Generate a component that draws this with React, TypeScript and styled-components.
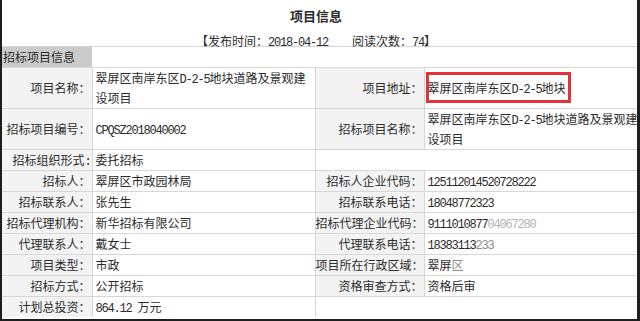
import React from 'react'
import styled, {createGlobalStyle} from 'styled-components'

const GlobalStyle = createGlobalStyle`
  html, body {
    margin: 0;
    padding: 0;
    background: #fff;
  }
  body {
    font-family: "Noto Sans CJK SC", "Noto Sans", sans-serif;
    color: #2b2b2b;
  }
`

const Frame = styled.div`
  width: 640px;
  height: 321px;
  box-sizing: border-box;
  border-left: 2px solid #1e1e1e;
  border-right: 3px solid #1e1e1e;
  border-bottom: 2px solid #1e1e1e;
  background: #fff;
  overflow: hidden;
`

const TitleBar = styled.div`
  height: 47px;
  box-sizing: border-box;
  padding: 7px 7px 0 0;
  border-bottom: 1px solid #d6d6d6;
  display: flex;
  flex-direction: column;
  align-items: center;
  gap: 7px;
`

const Title = styled.div`
  font-size: 13px;
  line-height: 18px;
  font-weight: bold;
  color: #2b2b2b;
`

const Meta = styled.div`
  font-size: 12px;
  line-height: 18px;
  white-space: pre;
`

const Latin = styled.span`
  font-family: "Liberation Mono", monospace;
  font-size: 12px;
  line-height: 1;
  letter-spacing: -1.2px;
  white-space: pre;
`

const Faded = styled.span<{$tone: string}>`
  color: ${(p) => p.$tone};
`

const Table = styled.table`
  width: 640px;
  border-collapse: collapse;
  border-style: hidden;
  table-layout: fixed;
  font-size: 12px;
`

const Cell = styled.td`
  border: 1px solid #d7d7d7;
  padding: 0;
  height: 20px;
  line-height: 20px;
  vertical-align: middle;
`

const HeadCell = styled(Cell)`
  background: #cbcbcb;
  border-top: none;
  border-left: none;
  border-right: none;
  padding-left: 1px;
  white-space: nowrap;
`

const LabelCell = styled(Cell)`
  background: #f3f3f3;
  text-align: right;
  padding-right: 1px;
  white-space: nowrap;
`

const ValueCell = styled(Cell)`
  padding-left: 3px;
  text-align: left;
  word-break: break-all;
  position: relative;
`

const Highlight = styled.div`
  position: absolute;
  left: 1px;
  top: 4px;
  width: 145px;
  height: 31px;
  box-sizing: border-box;
  border: 3px solid #e3323a;
  pointer-events: none;
`

// ascii runs get the narrow mono face, like the page's SimSun half-width glyphs
function txt(s: string) {
  return s.split(/([\x20-\x7e]+)/).map((part, i) =>
    /^[\x20-\x7e]+$/.test(part) ? <Latin key={i}>{part}</Latin> : part
  )
}

interface Field {
  label: string
  value: string
  fade?: number
  tone?: string
  mark?: boolean
}

const rows: Array<[Field, Field?]> = [
  [
    {label: '项目名称：', value: '翠屏区南岸东区D-2-5地块道路及景观建设项目'},
    {label: '项目地址：', value: '翠屏区南岸东区D-2-5地块', mark: true},
  ],
  [
    {label: '招标项目编号：', value: 'CPQSZ2018040002'},
    {label: '招标项目名称：', value: '翠屏区南岸东区D-2-5地块道路及景观建设项目'},
  ],
  [{label: '招标组织形式:', value: '委托招标'}],
  [
    {label: '招标人：', value: '翠屏区市政园林局'},
    {label: '招标人企业代码：', value: '125112014520728222'},
  ],
  [
    {label: '招标联系人：', value: '张先生'},
    {label: '招标联系电话：', value: '18048772323'},
  ],
  [
    {label: '招标代理机构：', value: '新华招标有限公司'},
    {label: '招标代理企业代码：', value: '911101087704067280', fade: 8, tone: '#b4b4b4'},
  ],
  [
    {label: '代理联系人：', value: '戴女士'},
    {label: '代理联系电话：', value: '18383113233', fade: 3, tone: '#8a8a8a'},
  ],
  [
    {label: '项目类型：', value: '市政'},
    {label: '项目所在行政区域：', value: '翠屏区', fade: 1, tone: '#8a8a8a'},
  ],
  [
    {label: '招标方式：', value: '公开招标'},
    {label: '资格审查方式：', value: '资格后审'},
  ],
  [{label: '计划总投资：', value: '864.12 万元'}],
]

function FieldCells({field}: {field: Field}) {
  const {label, value, fade = 0, tone = '#999', mark} = field
  const head = value.slice(0, value.length - fade)
  const tail = value.slice(value.length - fade)
  return (
    <>
      <LabelCell>{txt(label)}</LabelCell>
      <ValueCell>
        {txt(head)}
        {tail && <Faded $tone={tone}>{txt(tail)}</Faded>}
        {mark && <Highlight />}
      </ValueCell>
    </>
  )
}

export default function App() {
  return (
    <>
      <GlobalStyle />
      <Frame>
        <TitleBar>
          <Title>项目信息</Title>
          <Meta>
            【发布时间：{txt('2018-04-12    ')}阅读次数：{txt('74')}】
          </Meta>
        </TitleBar>
        <Table>
          <colgroup>
            <col style={{width: 90}} />
            <col style={{width: 223}} />
            <col style={{width: 109}} />
            <col style={{width: 218}} />
          </colgroup>
          <tbody>
            <tr>
              <HeadCell>招标项目信息</HeadCell>
            </tr>
            {rows.map(([left, right], i) => (
              <tr key={i}>
                <FieldCells field={left} />
                {right && <FieldCells field={right} />}
              </tr>
            ))}
          </tbody>
        </Table>
      </Frame>
    </>
  )
}
